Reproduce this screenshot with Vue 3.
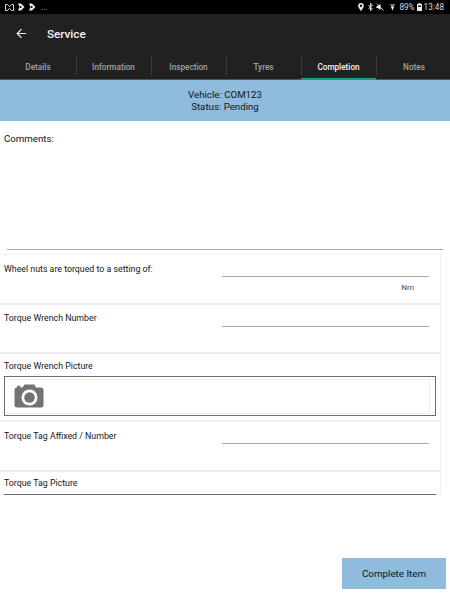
<template>
  <div class="screen">
    <div class="status">
      <div class="status-left">
        <svg class="si" width="9" height="7" viewBox="0 0 9 7"><path d="M0.5 0.5h2l2 2.2 2-2.2h2v6h-2l-2-2.2-2 2.2h-2z" fill="none" stroke="#ddd" stroke-width="1"/></svg>
        <svg class="si" width="8" height="8" viewBox="0 0 8 8"><path d="M1 0.5h3l3.5 3.500-3.500 3.500h-3l1.500-3.500z" fill="#eee"/><circle cx="3.600" cy="4" r="1" fill="#000"/></svg>
        <svg class="si" width="8" height="8" viewBox="0 0 8 8"><path d="M1 0.5h3l3.5 3.500-3.500 3.500h-3l1.500-3.500z" fill="#eee"/><circle cx="3.600" cy="4" r="1" fill="#000"/></svg>
        <span class="dots">...</span>
      </div>
      <div class="status-right">
        <svg width="6" height="8" viewBox="0 0 6 8"><path d="M3 0a2.800 2.800 0 0 0-2.800 2.800C.2 4.800 3 8 3 8s2.800-3.200 2.800-5.200A2.800 2.800 0 0 0 3 0zm0 4a1.200 1.200 0 1 1 0-2.400A1.200 1.200 0 0 1 3 4z" fill="#eee"/></svg>
        <svg class="bt" width="5" height="8" viewBox="0 0 5 8"><path d="M.4 2l4 4L2.500 7.600V.4l2 1.600-4 4" fill="none" stroke="#eee" stroke-width=".9"/></svg>
        <svg class="mute" width="8" height="8" viewBox="0 0 8 8"><path d="M.5 3h1.500L4.500.8v6.400L2 5H.500z" fill="#eee"/><path d="M1 .8L7.500 7.500" stroke="#eee" stroke-width=".9"/></svg>
        <svg class="wifi" width="5" height="8" viewBox="0 0 5 8"><path d="M0 1h5L2.500 7.500z" fill="#777"/><path d="M1 3.500h3L2.500 7.500z" fill="#eee"/></svg>
        <span class="pct">89%</span>
        <svg class="batt" width="5" height="8" viewBox="0 0 5 8"><path d="M1.500 0h2v1H5v7H0V1h1.500z" fill="#eee"/><rect x="1" y="2.500" width="3" height="1.500" fill="#222"/></svg>
        <span class="time">13:48</span>
      </div>
    </div>

    <header class="toolbar">
      <div class="title-row">
        <svg class="back" width="11" height="11" viewBox="0 0 12 12"><path d="M11 6H1.500M6 1.300L1.300 6 6 10.700" fill="none" stroke="#f2f2f2" stroke-width="1.300"/></svg>
        <span class="title">Service</span>
      </div>
      <nav class="tabs">
        <div v-for="t in tabs" :key="t" class="tab" :class="{ active: t === 'Completion' }">
          <span>{{ t }}</span>
        </div>
      </nav>
    </header>

    <div class="banner">
      <div>Vehicle: COM123</div>
      <div>Status: Pending</div>
    </div>

    <main class="content">
      <section class="comments">
        <div class="comments-label">Comments:</div>
        <div class="comments-line"></div>
      </section>

      <section class="row row-first">
        <div class="row-split">
          <span class="label">Wheel nuts are torqued to a setting of:</span>
          <div class="field">
            <div class="line"></div>
            <div class="unit">Nm</div>
          </div>
        </div>
      </section>
      <section class="row row-second">
        <div class="row-split">
          <span class="label">Torque Wrench Number</span>
          <div class="field"><div class="line"></div></div>
        </div>
      </section>
      <section class="row row-pic">
        <span class="label">Torque Wrench Picture</span>
        <div class="picbox">
          <div class="picinner">
            <svg class="camera" width="30" height="24" viewBox="0 0 30 24">
              <path d="M3 3.500h5.500L10.500 0.500h10L22 3.500h5a2.500 2.500 0 0 1 2.500 2.500v15a2.500 2.500 0 0 1-2.500 2.500H3A2.500 2.500 0 0 1 .5 21V6A2.500 2.500 0 0 1 3 3.500z" fill="#737373"/>
              <circle cx="15.500" cy="13.500" r="8" fill="#fff"/>
              <circle cx="15.500" cy="13.500" r="5.300" fill="#737373"/>
              <rect x="3" y="1.800" width="3.500" height="2" fill="#737373"/>
            </svg>
          </div>
        </div>
      </section>
      <section class="row row-tag">
        <div class="row-split">
          <span class="label">Torque Tag Affixed / Number</span>
          <div class="field"><div class="line"></div></div>
        </div>
      </section>
      <section class="row row-last">
        <span class="label">Torque Tag Picture</span>
        <div class="picbox picbox-cut"></div>
      </section>
    </main>

    <footer class="footer">
      <button class="complete">Complete Item</button>
    </footer>
  </div>
</template>

<script setup>
const tabs = ['Details', 'Information', 'Inspection', 'Tyres', 'Completion', 'Notes']
</script>

<style>
html, body { margin: 0; background: #fff; }
</style>

<style scoped>
.screen {
  width: 450px;
  height: 600px;
  display: flex;
  flex-direction: column;
  overflow: hidden;
  background: #fff;
  font-family: Roboto, "Liberation Sans", sans-serif;
  color: #111;
}
.status {
  height: 14px;
  background: #000;
  display: flex;
  align-items: center;
  justify-content: space-between;
  padding: 0 6px 0 5px;
  color: #dcdcdc;
  font-size: 8.200px;
}
.status-left, .status-right { display: flex; align-items: center; }
.status-left { gap: 3px; }
.dots { margin-left: 2px; color: #bbb; }
.bt { margin-left: 4px; }
.mute { margin-left: 3px; }
.wifi { margin-left: 6px; }
.pct { margin-left: 4px; }
.batt { margin-left: 2px; }
.time { margin-left: 2px; }
.toolbar { background: #212121; height: 66px; display: flex; flex-direction: column; }
.title-row {
  height: 39px;
  display: flex;
  align-items: center;
  padding-left: 16px;
  gap: 20px;
}
.title { color: #f2f2f2; font-size: 11.700px; font-weight: 500; }
.tabs {
  display: grid;
  grid-template-columns: 76px 75px 75px 75px 75px 76px;
  height: 25px;
  margin-top: 2px;
  box-shadow: inset 0 -1px 0 #555;
}
.tab {
  position: relative;
  display: flex;
  align-items: center;
  justify-content: center;
  color: #a3a3a3;
  font-size: 8.200px;
  font-weight: 500;
  padding-bottom: 2px;
  box-sizing: border-box;
  height: 25px;
}
.tab + .tab::before {
  content: "";
  position: absolute;
  left: 0;
  top: 1px;
  bottom: 5px;
  width: 1px;
  background: #3d3d3d;
}
.tab.active { color: #f4f4f4; border-bottom: 2px solid #1a9a8c; padding-bottom: 0; }
.tab.active::before { bottom: 3px; }
.banner {
  height: 41px;
  background: #8fbbdd;
  box-sizing: border-box;
  padding-top: 9px;
  text-align: center;
  font-size: 9.700px;
  line-height: 11.500px;
  color: #0e1720;
}
.content { height: 374px; overflow: hidden; }
.comments { height: 133px; padding-left: 4px; box-sizing: border-box; }
.comments-label { padding-top: 12px; font-size: 9.700px; line-height: 12px; }
.comments-line {
  margin: 104px 0 0 3px;
  width: 436px;
  height: 1px;
  background: #a8a8a8;
}
.row {
  width: 441px;
  box-sizing: border-box;
  padding: 0 0 0 4px;
  border-right: 1px solid #f1f1f1;
  border-bottom: 2px solid #eeeeee;
}
.row-first { height: 51px; border-top: 1px solid #f1f1f1; }
.row-second { height: 49px; }
.row-pic { height: 68px; }
.row-tag { height: 50px; }
.row-last { height: 40px; border-bottom: none; }
.row-split { position: relative; display: flex; height: 100%; }
.label { display: block; font-size: 8.800px; line-height: 11px; color: #161616; padding-top: 8px; }
.row-first .label { padding-top: 9px; }
.row-pic .label { padding-top: 7px; }
.row-tag .label { padding-top: 9px; }
.row-last .label { padding-top: 6px; }
.field { position: absolute; left: 218px; width: 207px; top: 21px; }
.line { height: 1px; background: #a8a8a8; }
.unit { font-size: 8px; line-height: 10px; color: #444; text-align: right; padding: 6px 15px 0 0; }
.picbox {
  margin-top: 4px;
  width: 432px;
  height: 40px;
  box-sizing: border-box;
  border: 1px solid #6e6e6e;
  padding: 2px 1px 1px 2px;
}
.picinner {
  width: 423px;
  height: 35px;
  box-sizing: border-box;
  border: 1px solid #eee;
  border-left: none;
  padding: 1px 0 0 7px;
  display: flex;
  align-items: flex-start;
}
.camera { display: block; margin-top: 3px; }
.picbox-cut { margin-top: 5px; }
.footer {
  flex: 1;
  display: flex;
  justify-content: flex-end;
  align-items: flex-start;
  padding: 63px 4px 0 0;
}
.complete {
  width: 104px;
  height: 31px;
  border: none;
  background: #8fbbdd;
  color: #0e1720;
  font: 400 9.800px Roboto, "Liberation Sans", sans-serif;
  padding: 0;
}
</style>
